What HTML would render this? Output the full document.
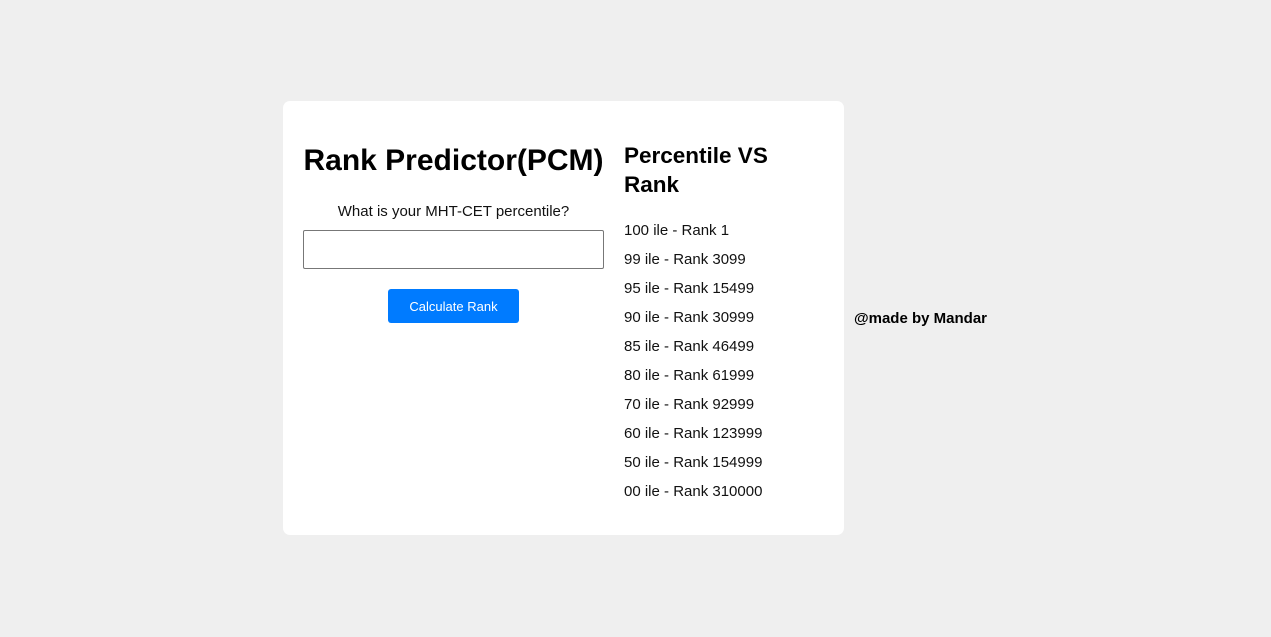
<!DOCTYPE html>
<html><head><style>
body{margin:0;width:1271px;height:637px;background:#efefef;font-family:"Liberation Sans",sans-serif;position:relative;overflow:hidden;color:#111}
.card{position:absolute;left:283px;top:101px;width:561px;height:434px;background:#fff;border-radius:7px}
.a{position:absolute;white-space:nowrap}
h1{position:absolute;left:300px;top:141px;width:307px;margin:0;font-size:30px;font-weight:bold;text-align:center;line-height:40px;color:#000}
h2{position:absolute;left:624px;top:141px;margin:0;font-size:22.5px;font-weight:bold;line-height:29px;color:#000}
.lbl{left:303px;width:301px;text-align:center;top:202px;font-size:15px;line-height:20px}
.inp{position:absolute;left:303px;top:230px;width:299px;height:37px;border:1px solid #777;border-radius:2px}
.btn{position:absolute;left:388px;top:289px;width:131px;height:34px;background:#007bff;border-radius:3px;color:#fff;font-size:13px;line-height:35px;text-align:center}
.li{left:624px;font-size:15px;line-height:20px}
</style></head><body>
<div class="card"></div>
<h1>Rank Predictor(PCM)</h1>
<div class="a lbl">What is your MHT-CET percentile?</div>
<div class="inp"></div>
<div class="btn">Calculate Rank</div>
<h2>Percentile VS<br>Rank</h2>
<div class="a li" style="top:221px">100 ile - Rank 1</div>
<div class="a li" style="top:250px">99 ile - Rank 3099</div>
<div class="a li" style="top:279px">95 ile - Rank 15499</div>
<div class="a li" style="top:308px">90 ile - Rank 30999</div>
<div class="a li" style="top:337px">85 ile - Rank 46499</div>
<div class="a li" style="top:366px">80 ile - Rank 61999</div>
<div class="a li" style="top:395px">70 ile - Rank 92999</div>
<div class="a li" style="top:424px">60 ile - Rank 123999</div>
<div class="a li" style="top:453px">50 ile - Rank 154999</div>
<div class="a li" style="top:482px">00 ile - Rank 310000</div>
<div class="a" style="left:854px;top:310px;font-size:15px;font-weight:bold;line-height:18px;color:#000">@made by Mandar</div>
</body></html>
